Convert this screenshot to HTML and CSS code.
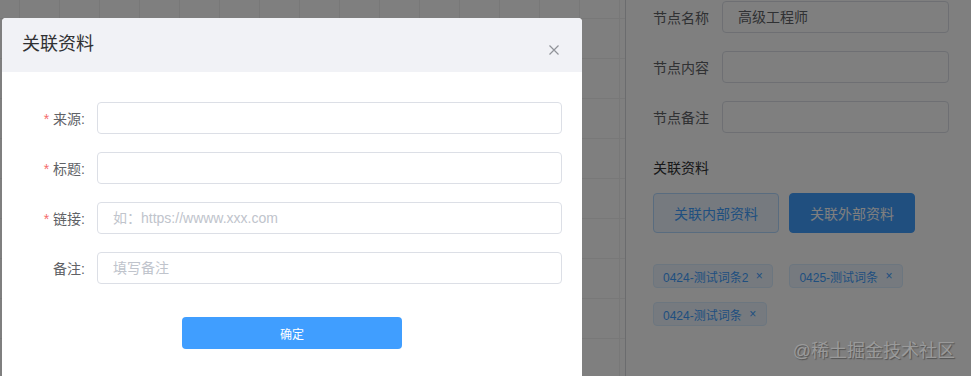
FILE: index.html
```html
<!DOCTYPE html>
<html lang="zh-CN">
<head>
    <meta charset="UTF-8">
    <meta name="viewport" content="width=device-width, initial-scale=1.0">
    <title>关联资料</title>
    <link rel="stylesheet" href="styles.css">
</head>
<body class="modal-open">
    <div class="layout">
        <div class="canvas"></div>

        <div class="panel">
            <div class="row">
                <label class="row-label">节点名称</label>
                <div class="row-input">高级工程师</div>
            </div>
            <div class="row">
                <label class="row-label">节点内容</label>
                <div class="row-input"></div>
            </div>
            <div class="row">
                <label class="row-label">节点备注</label>
                <div class="row-input"></div>
            </div>

            <div class="section-title">关联资料</div>
            <div class="btn-group">
                <button class="btn btn-plain">关联内部资料</button>
                <button class="btn btn-primary">关联外部资料</button>
            </div>

            <div class="tags">
                <span class="tag">0424-测试词条2<i class="tag-close">×</i></span>
                <span class="tag">0425-测试词条<i class="tag-close">×</i></span>
                <span class="tag">0424-测试词条<i class="tag-close">×</i></span>
            </div>
        </div>
    </div>

    <div class="overlay"></div>

    <div class="dialog">
        <div class="dialog-header">
            <span class="dialog-title">关联资料</span>
            <span class="dialog-close">
                <svg width="10" height="10" viewBox="0 0 10 10">
                    <path d="M0.5 0.5 L9.5 9.5 M9.5 0.5 L0.5 9.5" stroke="#909399" stroke-width="1.2" fill="none"/>
                </svg>
            </span>
        </div>
        <div class="dialog-body">
            <div class="form-item">
                <label class="form-label"><span class="req">*</span>来源:</label>
                <input class="form-input" type="text">
            </div>
            <div class="form-item">
                <label class="form-label"><span class="req">*</span>标题:</label>
                <input class="form-input" type="text">
            </div>
            <div class="form-item">
                <label class="form-label"><span class="req">*</span>链接:</label>
                <input class="form-input" type="text" placeholder="如：https://wwww.xxx.com">
            </div>
            <div class="form-item">
                <label class="form-label">备注:</label>
                <input class="form-input" type="text" placeholder="填写备注">
            </div>

            <div class="dialog-footer">
                <button class="btn-submit">确定</button>
            </div>
        </div>
    </div>

    <div class="watermark">@稀土掘金技术社区</div>
</body>
</html>
```

FILE: styles.css
```css
* {
    margin: 0;
    padding: 0;
    box-sizing: border-box;
}

body {
    font-family: "Liberation Sans", "Noto Sans CJK SC", sans-serif;
    width: 971px;
    height: 376px;
    overflow: hidden;
    position: relative;
    background-color: #7f7f7f;
}

.layout {
    display: flex;
    height: 376px;
}

.canvas {
    flex: 0 0 625px;
    background-color: #fff;
    background-image:
        linear-gradient(to right, #f0f0f0 1px, transparent 1px),
        linear-gradient(to bottom, #f0f0f0 1px, transparent 1px);
    background-size: 40px 40px;
    background-position: 19px 18px;
}

.panel {
    flex: 1;
    background-color: #fff;
    border-left: 1px solid #d6d8dc;
    padding: 1px 22px 0 27px;
}

.row {
    display: flex;
    align-items: center;
    margin-bottom: 18px;
}

.row-label {
    width: 69px;
    font-size: 14px;
    color: #606266;
}

.row-input {
    width: 227px;
    height: 32px;
    line-height: 30px;
    border: 1px solid #dcdfe6;
    border-radius: 4px;
    padding: 0 15px;
    font-size: 14px;
    color: #606266;
}

.section-title {
    margin-top: 25px;
    font-size: 14px;
    line-height: 20px;
    color: #303133;
}

.btn-group {
    display: flex;
    gap: 10px;
    margin-top: 15px;
}

.btn {
    height: 40px;
    padding: 0 20px;
    width: 126px;
    border-radius: 4px;
    font-size: 14px;
    font-family: inherit;
}

.btn-plain {
    background-color: #ecf5ff;
    border: 1px solid #b3d8ff;
    color: #409eff;
}

.btn-primary {
    background-color: #409eff;
    border: 1px solid #409eff;
    color: #fff;
}

.tags {
    display: flex;
    flex-wrap: wrap;
    gap: 14px 16px;
    margin-top: 31px;
    width: 270px;
}

.tag {
    display: inline-flex;
    align-items: center;
    height: 24px;
    padding: 0 5px 0 9px;
    background-color: #ecf5ff;
    border: 1px solid #d9ecff;
    border-radius: 4px;
    color: #409eff;
    font-size: 12px;
}

.tag-close {
    font-style: normal;
    width: 16px;
    margin-left: 3px;
    text-align: center;
    font-size: 12px;
}

/* 遮罩层 */
.overlay {
    position: absolute;
    top: 0;
    left: 0;
    width: 971px;
    height: 376px;
    background-color: #000;
    opacity: 0.5;
    z-index: 10;
}

.dialog {
    position: absolute;
    z-index: 20;
    left: 2px;
    top: 18px;
    width: 580px;
    height: 358px;
    background-color: #fff;
    border-radius: 4px 4px 0 0;
    overflow: hidden;
}

.dialog-header {
    display: flex;
    justify-content: space-between;
    align-items: center;
    height: 54px;
    padding: 0 23px 0 20px;
    background-color: #f1f2f6;
}

.dialog-title {
    font-size: 18px;
    line-height: 24px;
    color: #303133;
    margin-top: -2px;
}

.dialog-close {
    display: flex;
    margin-top: 9px;
}

.dialog-body {
    padding: 30px 20px 0;
}

.form-item {
    display: flex;
    align-items: center;
    margin-bottom: 18px;
}

.form-label {
    width: 75px;
    padding-right: 12px;
    text-align: right;
    font-size: 14px;
    color: #606266;
}

.req {
    color: #f56c6c;
    margin-right: 4px;
}

.form-input {
    width: 465px;
    height: 32px;
    border: 1px solid #dcdfe6;
    border-radius: 4px;
    padding: 0 15px;
    font-size: 14px;
    font-family: inherit;
    color: #606266;
    outline: none;
}

.form-input::placeholder {
    color: #c0c4cc;
}

.dialog-footer {
    display: flex;
    justify-content: center;
    padding-top: 15px;
}

.btn-submit {
    width: 220px;
    height: 32px;
    background-color: #409eff;
    border: none;
    border-radius: 4px;
    color: #fff;
    font-size: 12px;
    font-family: inherit;
}

.watermark {
    position: absolute;
    z-index: 30;
    right: 16px;
    bottom: 14px;
    font-size: 18px;
    color: #9a9a9a;
    text-shadow: 1px 1px 1px rgba(0, 0, 0, 0.35);
}
```
